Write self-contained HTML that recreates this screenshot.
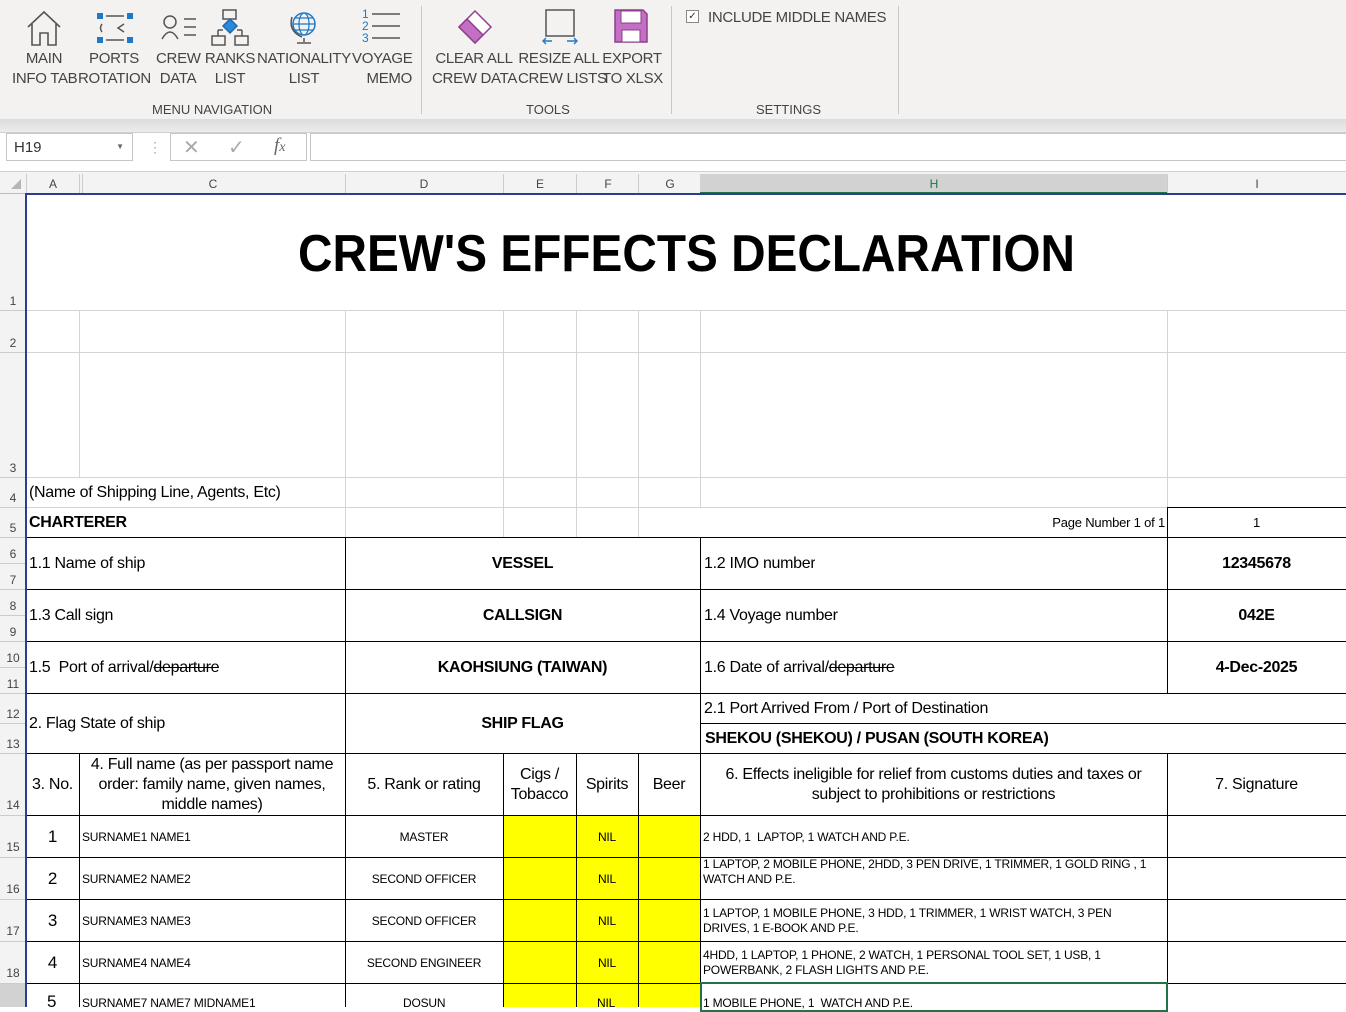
<!DOCTYPE html>
<html><head><meta charset="utf-8">
<style>
*{margin:0;padding:0;box-sizing:border-box}
body{width:1346px;height:1007px;overflow:hidden;background:#fff;font-family:"Liberation Sans",Arial,sans-serif;position:relative;color:#000}
.a{position:absolute}
.rl{position:absolute;font-size:15px;color:#444;text-align:center;line-height:20px;white-space:nowrap;letter-spacing:-0.3px}
.gl{position:absolute;font-size:13px;color:#444;white-space:nowrap}
.vl{position:absolute;width:1px;background:#d4d4d4}
.hl{position:absolute;height:1px;background:#d4d4d4}
.bv{position:absolute;width:1px;background:#000}
.bh{position:absolute;height:1px;background:#000}
.c{position:absolute;display:flex;align-items:center;white-space:nowrap;overflow:hidden;font-size:16px;letter-spacing:-0.3px}
.ctr{justify-content:center;text-align:center}
.b{font-weight:bold}
.rn{position:absolute;left:0;width:26px;text-align:center;font-size:12px;color:#444}
.ch{position:absolute;top:177px;font-size:12px;color:#444;transform:translateX(-50%)}
.sm{font-size:12px;letter-spacing:-0.2px}
.y{position:absolute;background:#ffff00}
</style></head><body>
<!-- ribbon -->
<div class="a" style="left:0;top:0;width:1346px;height:119px;background:#f3f2f1"></div>
<div class="a" style="left:0;top:119px;width:1346px;height:13px;background:linear-gradient(#dcdcdc,#ececec)"></div>
<div class="a" style="left:0;top:132px;width:1346px;height:40px;background:#fff;border-top:1px solid #d0d0d0;border-bottom:1px solid #d0d0d0"></div>
<div class="a" style="left:421px;top:6px;width:1px;height:108px;background:#c8c8c8"></div>
<div class="a" style="left:671px;top:6px;width:1px;height:108px;background:#c8c8c8"></div>
<div class="a" style="left:898px;top:6px;width:1px;height:108px;background:#c8c8c8"></div>

<!-- icons -->
<svg class="a" style="left:24px;top:8px" width="40" height="40" viewBox="0 0 40 40" fill="none" stroke="#555" stroke-width="1.6"><path d="M4 19 L20 4 L36 19 M8 16 V37 H16 V25 H24 V37 H32 V16"/></svg>
<svg class="a" style="left:94px;top:10px" width="42" height="34" viewBox="0 0 42 34"><rect x="3" y="3" width="6" height="6" fill="#1e7ac8"/><rect x="33" y="3" width="6" height="6" fill="#1e7ac8"/><rect x="3" y="27" width="6" height="6" fill="#1e7ac8"/><rect x="33" y="27" width="6" height="6" fill="#1e7ac8"/><path d="M12 6H30 M12 30H30 M8 14 Q5 18 8 22 M30 14 L24 18 L30 22" stroke="#555" stroke-width="1.5" fill="none"/></svg>
<svg class="a" style="left:160px;top:13px" width="38" height="28" viewBox="0 0 38 28" fill="none" stroke="#555" stroke-width="1.5"><circle cx="10" cy="9" r="6"/><path d="M2 26 Q10 12 18 26 M24 6H36 M24 14H36 M24 22H36"/></svg>
<svg class="a" style="left:210px;top:8px" width="40" height="38" viewBox="0 0 40 38" fill="none" stroke="#555" stroke-width="1.5"><rect x="13" y="2" width="13" height="9"/><path d="M20 11 L27 18 L20 25 L13 18Z" fill="#2b88d8" stroke="#1e6bb0"/><path d="M8 22V28 M32 22V28 M8 22H13 M27 22H32"/><rect x="2" y="28" width="13" height="9"/><rect x="25" y="28" width="13" height="9"/></svg>
<svg class="a" style="left:288px;top:9px" width="32" height="36" viewBox="0 0 32 36" fill="none"><circle cx="16" cy="15" r="11" stroke="#1e7ac8" stroke-width="1.5"/><ellipse cx="16" cy="15" rx="5" ry="11" stroke="#1e7ac8" stroke-width="1.2"/><path d="M5 15H27 M7 9H25 M7 21H25" stroke="#1e7ac8" stroke-width="1.2"/><path d="M4 8 Q0 22 14 28 M16 29V33 M9 34H23" stroke="#555" stroke-width="1.5"/></svg>
<svg class="a" style="left:360px;top:6px" width="42" height="40" viewBox="0 0 42 40"><text x="2" y="12" font-size="12" fill="#1e7ac8" font-family="Liberation Sans">1</text><text x="2" y="24" font-size="12" fill="#1e7ac8" font-family="Liberation Sans">2</text><text x="2" y="36" font-size="12" fill="#1e7ac8" font-family="Liberation Sans">3</text><path d="M12 8H40 M12 20H40 M12 32H40" stroke="#555" stroke-width="1.5"/></svg>
<svg class="a" style="left:455px;top:9px" width="40" height="36" viewBox="0 0 40 36"><path d="M20 2 L36 18 L20 34 L4 18Z" fill="#fff" stroke="#8e3f8e" stroke-width="1.5"/><path d="M12 10 L28 26 L20 34 L4 18Z" fill="#c36fc3" stroke="#8e3f8e" stroke-width="1.5"/></svg>
<svg class="a" style="left:540px;top:8px" width="40" height="40" viewBox="0 0 40 40" fill="none"><rect x="6" y="2" width="28" height="26" stroke="#555" stroke-width="1.5"/><path d="M3 33H12 M6 30L3 33L6 36 M27 33H37 M34 30L37 33L34 36" stroke="#1e7ac8" stroke-width="1.4"/></svg>
<svg class="a" style="left:613px;top:8px" width="36" height="36" viewBox="0 0 36 36"><path d="M2 2H30L34 6V34H2Z" fill="#c36fc3" stroke="#8e3f8e" stroke-width="1.5"/><rect x="8" y="3" width="20" height="12" fill="#fff" stroke="#8e3f8e"/><rect x="9" y="22" width="18" height="12" fill="#fff" stroke="#8e3f8e"/></svg>
<!-- ribbon labels -->
<div class="rl" style="left:12px;top:49px;width:64px">MAIN<br>INFO TAB</div>
<div class="rl" style="left:78px;top:49px;width:72px">PORTS<br>ROTATION</div>
<div class="rl" style="left:156px;top:49px;width:44px">CREW<br>DATA</div>
<div class="rl" style="left:204px;top:49px;width:52px">RANKS<br>LIST</div>
<div class="rl" style="left:257px;top:49px;width:94px">NATIONALITY<br>LIST</div>
<div class="rl" style="left:352px;top:49px;width:60px;text-align:right">VOYAGE<br>MEMO</div>
<div class="rl" style="left:432px;top:49px;width:84px">CLEAR ALL<br>CREW DATA</div>
<div class="rl" style="left:518px;top:49px;width:82px">RESIZE ALL<br>CREW LISTS</div>
<div class="rl" style="left:602px;top:49px;width:60px">EXPORT<br>TO XLSX</div>
<div class="gl" style="left:152px;top:102px">MENU NAVIGATION</div>
<div class="gl" style="left:526px;top:102px">TOOLS</div>
<div class="gl" style="left:756px;top:102px">SETTINGS</div>
<div class="a" style="left:686px;top:10px;width:13px;height:13px;border:1px solid #888;background:#fff;font-size:10px;line-height:11px;text-align:center;color:#333">✓</div>
<div class="rl" style="left:708px;top:8px;text-align:left">INCLUDE MIDDLE NAMES</div>

<!-- formula bar -->
<div class="a" style="left:6px;top:133px;width:127px;height:28px;border:1px solid #c6c6c6;background:#fff;font-size:15px;color:#333;padding:5px 0 0 7px">H19<span style="position:absolute;right:8px;top:8px;font-size:8px;color:#666">▼</span></div>
<div class="a" style="left:148px;top:139px;color:#aaa;font-size:14px">⋮</div>
<div class="a" style="left:170px;top:133px;width:137px;height:28px;border:1px solid #c6c6c6;background:#fff"></div>
<div class="a" style="left:183px;top:135px;color:#aaa;font-size:20px">✕</div>
<div class="a" style="left:228px;top:135px;color:#aaa;font-size:20px">✓</div>
<div class="a" style="left:274px;top:135px;color:#666;font-size:19px;font-style:italic;font-family:'Liberation Serif',serif">f<span style="font-size:14px">x</span></div>
<div class="a" style="left:310px;top:133px;width:1040px;height:28px;border:1px solid #c6c6c6;background:#fff"></div>

<!-- column headers -->
<div class="a" style="left:0;top:172px;width:1346px;height:22px;background:#f3f3f3;border-bottom:1px solid #bbb"></div>
<div class="a" style="left:0;top:194px;width:26px;height:813px;background:#f3f3f3"></div>
<div class="a" style="left:700px;top:174px;width:467px;height:20px;background:#d2d2d2;border-bottom:2px solid #217346"></div>
<svg class="a" style="left:10px;top:178px" width="12" height="12"><path d="M11 1V11H1Z" fill="#b5b5b5"/></svg>
<div class="vl" style="left:26px;top:174px;height:20px;background:#ccc"></div>
<div class="vl" style="left:79px;top:174px;height:20px;background:#ccc"></div>
<div class="vl" style="left:82px;top:174px;height:20px;background:#ccc"></div>
<div class="vl" style="left:345px;top:174px;height:20px;background:#ccc"></div>
<div class="vl" style="left:503px;top:174px;height:20px;background:#ccc"></div>
<div class="vl" style="left:576px;top:174px;height:20px;background:#ccc"></div>
<div class="vl" style="left:638px;top:174px;height:20px;background:#ccc"></div>
<div class="vl" style="left:1167px;top:174px;height:20px;background:#ccc"></div>
<div class="ch" style="left:53px">A</div><div class="ch" style="left:213px">C</div><div class="ch" style="left:424px">D</div><div class="ch" style="left:540px">E</div><div class="ch" style="left:608px">F</div><div class="ch" style="left:670px">G</div><div class="ch" style="left:934px;color:#217346">H</div><div class="ch" style="left:1257px">I</div>

<!-- row header separators -->
<div class="hl" style="left:0;top:310px;width:26px;background:#ccc"></div>
<div class="hl" style="left:0;top:352px;width:26px;background:#ccc"></div>
<div class="hl" style="left:0;top:477px;width:26px;background:#ccc"></div>
<div class="hl" style="left:0;top:507px;width:26px;background:#ccc"></div>
<div class="hl" style="left:0;top:537px;width:26px;background:#ccc"></div>
<div class="hl" style="left:0;top:563px;width:26px;background:#ccc"></div>
<div class="hl" style="left:0;top:589px;width:26px;background:#ccc"></div>
<div class="hl" style="left:0;top:615px;width:26px;background:#ccc"></div>
<div class="hl" style="left:0;top:641px;width:26px;background:#ccc"></div>
<div class="hl" style="left:0;top:667px;width:26px;background:#ccc"></div>
<div class="hl" style="left:0;top:693px;width:26px;background:#ccc"></div>
<div class="hl" style="left:0;top:723px;width:26px;background:#ccc"></div>
<div class="hl" style="left:0;top:753px;width:26px;background:#ccc"></div>
<div class="hl" style="left:0;top:815px;width:26px;background:#ccc"></div>
<div class="hl" style="left:0;top:857px;width:26px;background:#ccc"></div>
<div class="hl" style="left:0;top:899px;width:26px;background:#ccc"></div>
<div class="hl" style="left:0;top:941px;width:26px;background:#ccc"></div>
<div class="hl" style="left:0;top:983px;width:26px;background:#ccc"></div>
<div class="a" style="left:0;top:984px;width:26px;height:23px;background:#d2d2d2"></div>
<div class="rn" style="top:294px">1</div><div class="rn" style="top:336px">2</div><div class="rn" style="top:461px">3</div><div class="rn" style="top:491px">4</div><div class="rn" style="top:521px">5</div><div class="rn" style="top:547px">6</div><div class="rn" style="top:573px">7</div><div class="rn" style="top:599px">8</div><div class="rn" style="top:625px">9</div><div class="rn" style="top:651px">10</div><div class="rn" style="top:677px">11</div><div class="rn" style="top:707px">12</div><div class="rn" style="top:737px">13</div><div class="rn" style="top:798px">14</div><div class="rn" style="top:840px">15</div><div class="rn" style="top:882px">16</div><div class="rn" style="top:924px">17</div><div class="rn" style="top:966px">18</div>

<!-- grid light lines rows 2-5 -->
<div class="hl" style="left:26px;top:310px;width:1320px"></div>
<div class="hl" style="left:26px;top:352px;width:1320px"></div>
<div class="hl" style="left:26px;top:477px;width:1320px"></div>
<div class="hl" style="left:26px;top:507px;width:1320px"></div>
<div class="vl" style="left:79px;top:310px;height:167px"></div>
<div class="vl" style="left:345px;top:310px;height:227px"></div>
<div class="vl" style="left:503px;top:310px;height:227px"></div>
<div class="vl" style="left:576px;top:310px;height:227px"></div>
<div class="vl" style="left:638px;top:310px;height:227px"></div>
<div class="vl" style="left:700px;top:310px;height:197px"></div>
<div class="vl" style="left:1167px;top:310px;height:197px"></div>

<!-- title -->
<svg class="a" style="left:26px;top:194px" width="1320" height="116"><text x="272" y="77" font-family="Liberation Sans" font-weight="bold" font-size="52" textLength="777" lengthAdjust="spacingAndGlyphs">CREW'S EFFECTS DECLARATION</text></svg>

<div class="c" style="left:29px;top:478px;height:29px">(Name of Shipping Line, Agents, Etc)</div>
<div class="c b" style="left:29px;top:508px;height:29px">CHARTERER</div>
<div class="c sm" style="left:900px;top:508px;height:29px;width:265px;justify-content:flex-end;font-size:13px">Page Number 1 of 1</div>
<div class="c sm ctr" style="left:1167px;top:508px;height:29px;width:179px;font-size:13px">1</div>
<div class="bv" style="left:1167px;top:507px;height:30px"></div>
<div class="bh" style="left:1167px;top:507px;width:179px"></div>

<!-- yellow cells -->
<div class="y" style="left:503px;top:815px;width:197px;height:192px"></div>

<!-- thick borders -->
<div class="bh" style="left:26px;top:537px;width:1320px"></div>
<div class="bh" style="left:26px;top:589px;width:1320px"></div>
<div class="bh" style="left:26px;top:641px;width:1320px"></div>
<div class="bh" style="left:26px;top:693px;width:1320px"></div>
<div class="bh" style="left:700px;top:723px;width:646px"></div>
<div class="bh" style="left:26px;top:753px;width:1320px"></div>
<div class="bh" style="left:26px;top:815px;width:1320px"></div>
<div class="bh" style="left:26px;top:857px;width:1320px"></div>
<div class="bh" style="left:26px;top:899px;width:1320px"></div>
<div class="bh" style="left:26px;top:941px;width:1320px"></div>
<div class="bh" style="left:26px;top:983px;width:1320px"></div>
<div class="bv" style="left:345px;top:537px;height:470px"></div>
<div class="bv" style="left:700px;top:537px;height:470px"></div>
<div class="bv" style="left:1167px;top:537px;height:156px"></div>
<div class="bv" style="left:1167px;top:753px;height:254px"></div>
<div class="bv" style="left:79px;top:753px;height:254px"></div>
<div class="bv" style="left:503px;top:753px;height:254px"></div>
<div class="bv" style="left:576px;top:753px;height:254px"></div>
<div class="bv" style="left:638px;top:753px;height:254px"></div>

<!-- left/top blue border -->
<div class="a" style="left:25px;top:193px;width:1321px;height:2px;background:#2a3f8f"></div>
<div class="a" style="left:25px;top:193px;width:2px;height:814px;background:#2a3f8f"></div>

<!-- selection H19 -->
<div class="a" style="left:700px;top:982px;width:468px;height:30px;border:2px solid #217346"></div>

<!-- form text -->
<div class="c" style="left:29px;top:538px;height:51px">1.1 Name of ship</div>
<div class="c b ctr" style="left:345px;top:538px;height:51px;width:355px">VESSEL</div>
<div class="c" style="left:704px;top:538px;height:51px">1.2 IMO number</div>
<div class="c b ctr" style="left:1167px;top:538px;height:51px;width:179px">12345678</div>
<div class="c" style="left:29px;top:590px;height:51px">1.3 Call sign</div>
<div class="c b ctr" style="left:345px;top:590px;height:51px;width:355px">CALLSIGN</div>
<div class="c" style="left:704px;top:590px;height:51px">1.4 Voyage number</div>
<div class="c b ctr" style="left:1167px;top:590px;height:51px;width:179px">042E</div>
<div class="c" style="left:29px;top:642px;height:51px">1.5&nbsp; Port of arrival/<s>departure</s></div>
<div class="c b ctr" style="left:345px;top:642px;height:51px;width:355px">KAOHSIUNG (TAIWAN)</div>
<div class="c" style="left:704px;top:642px;height:51px">1.6 Date of arrival/<s>departure</s></div>
<div class="c b ctr" style="left:1167px;top:642px;height:51px;width:179px">4-Dec-2025</div>
<div class="c" style="left:29px;top:694px;height:59px">2. Flag State of ship</div>
<div class="c b ctr" style="left:345px;top:694px;height:59px;width:355px">SHIP FLAG</div>
<div class="c" style="left:704px;top:694px;height:29px">2.1 Port Arrived From / Port of Destination</div>
<div class="c b" style="left:705px;top:724px;height:29px">SHEKOU (SHEKOU) / PUSAN (SOUTH KOREA)</div>

<!-- header row 14 -->
<div class="c ctr" style="left:26px;top:754px;height:61px;width:53px">3. No.</div>
<div class="c ctr" style="left:79px;top:754px;height:61px;width:266px;white-space:normal;line-height:20px">4. Full name (as per passport name order: family name, given names, middle names)</div>
<div class="c ctr" style="left:345px;top:754px;height:61px;width:158px">5. Rank or rating</div>
<div class="c ctr" style="left:503px;top:754px;height:61px;width:73px;white-space:normal;line-height:20px">Cigs / Tobacco</div>
<div class="c ctr" style="left:576px;top:754px;height:61px;width:62px">Spirits</div>
<div class="c ctr" style="left:638px;top:754px;height:61px;width:62px">Beer</div>
<div class="c ctr" style="left:700px;top:754px;height:61px;width:467px;white-space:normal;line-height:20px;padding:0 10px">6. Effects ineligible for relief from customs duties and taxes or subject to prohibitions or restrictions</div>
<div class="c ctr" style="left:1167px;top:754px;height:61px;width:179px">7. Signature</div>

<!-- data rows -->
<div class="c ctr" style="left:26px;top:816px;height:41px;width:53px;font-size:17px">1</div>
<div class="c sm" style="left:82px;top:816px;height:41px">SURNAME1 NAME1</div>
<div class="c sm ctr" style="left:345px;top:816px;height:41px;width:158px">MASTER</div>
<div class="c sm ctr" style="left:576px;top:816px;height:41px;width:62px">NIL</div>
<div class="c sm" style="left:703px;top:816px;height:41px">2 HDD, 1&nbsp; LAPTOP, 1 WATCH AND P.E.</div>

<div class="c ctr" style="left:26px;top:858px;height:41px;width:53px;font-size:17px">2</div>
<div class="c sm" style="left:82px;top:858px;height:41px">SURNAME2 NAME2</div>
<div class="c sm ctr" style="left:345px;top:858px;height:41px;width:158px">SECOND OFFICER</div>
<div class="c sm ctr" style="left:576px;top:858px;height:41px;width:62px">NIL</div>
<div class="a sm" style="left:703px;top:857px;line-height:15px;font-size:12px;letter-spacing:-0.2px">1 LAPTOP, 2 MOBILE PHONE, 2HDD, 3 PEN DRIVE, 1 TRIMMER, 1 GOLD RING , 1<br>WATCH AND P.E.</div>

<div class="c ctr" style="left:26px;top:900px;height:41px;width:53px;font-size:17px">3</div>
<div class="c sm" style="left:82px;top:900px;height:41px">SURNAME3 NAME3</div>
<div class="c sm ctr" style="left:345px;top:900px;height:41px;width:158px">SECOND OFFICER</div>
<div class="c sm ctr" style="left:576px;top:900px;height:41px;width:62px">NIL</div>
<div class="a sm" style="left:703px;top:906px;line-height:15px;font-size:12px;letter-spacing:-0.2px">1 LAPTOP, 1 MOBILE PHONE, 3 HDD, 1 TRIMMER, 1 WRIST WATCH, 3 PEN<br>DRIVES, 1 E-BOOK AND P.E.</div>

<div class="c ctr" style="left:26px;top:942px;height:41px;width:53px;font-size:17px">4</div>
<div class="c sm" style="left:82px;top:942px;height:41px">SURNAME4 NAME4</div>
<div class="c sm ctr" style="left:345px;top:942px;height:41px;width:158px">SECOND ENGINEER</div>
<div class="c sm ctr" style="left:576px;top:942px;height:41px;width:62px">NIL</div>
<div class="a sm" style="left:703px;top:948px;line-height:15px;font-size:12px;letter-spacing:-0.2px">4HDD, 1 LAPTOP, 1 PHONE, 2 WATCH, 1 PERSONAL TOOL SET, 1 USB, 1<br>POWERBANK, 2 FLASH LIGHTS AND P.E.</div>

<div class="a" style="left:47px;top:992px;font-size:17px">5</div>
<div class="a sm" style="left:82px;top:996px;font-size:12px">SURNAME7 NAME7 MIDNAME1</div>
<div class="a sm" style="left:403px;top:996px;font-size:12px">DOSUN</div>
<div class="a sm" style="left:597px;top:996px;font-size:12px">NIL</div>
<div class="a sm" style="left:703px;top:996px;font-size:12px">1 MOBILE PHONE, 1&nbsp; WATCH AND P.E.</div>
</body></html>
